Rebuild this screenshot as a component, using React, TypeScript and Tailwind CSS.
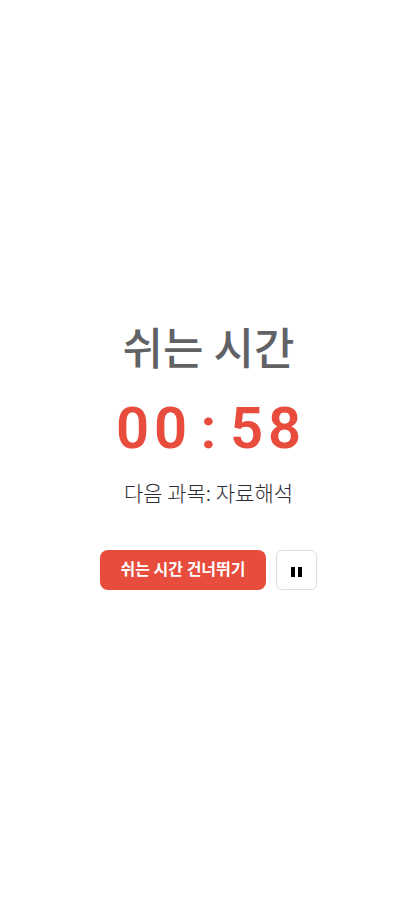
const time = "00:58";

export default function App() {
  return (
    <main className="flex min-h-screen flex-col items-center justify-center bg-white pt-0.5 pl-[3px] font-['Noto_Sans_CJK_KR',sans-serif]">
      <h1 className="text-[44px] leading-[56px] font-medium text-[#616266]">쉬는 시간</h1>
      <div role="timer" className="mt-4 grid grid-cols-[repeat(5,38px)] text-center font-['Roboto','Noto_Sans_CJK_KR',sans-serif] text-[58px] leading-[76px] font-semibold text-[#e74c3c]">
        {time.split("").map((digit, index) => (
          <span key={index}>{digit}</span>
        ))}
      </div>
      <p className="mt-3 text-[21px] leading-[28px] font-light text-[#2c2c34]">다음 과목: 자료해석</p>
      <div className="mt-11 flex gap-[10px]">
        <button type="button" className="h-10 rounded-lg bg-[#e74c3c] px-5 pb-1 text-base font-bold text-white">쉬는 시간 건너뛰기</button>
        <button type="button" aria-label="일시정지" className="flex h-10 w-[41px] items-center justify-center rounded-md border border-[#dcdde6] bg-white pt-1">
          <svg width="11" height="10" viewBox="0 0 11 10" aria-hidden="true"><path d="M0 0h4v10H0zM7 0h4v10H7z" /></svg>
        </button>
      </div>
    </main>
  );
}
